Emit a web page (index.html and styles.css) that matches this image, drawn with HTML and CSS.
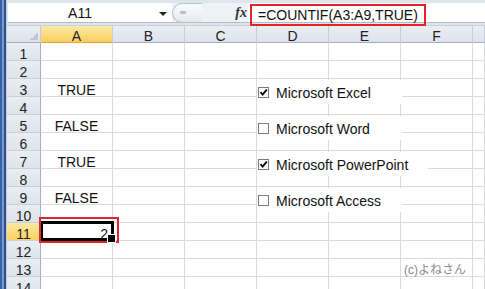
FILE: index.html
```html
<!DOCTYPE html>
<html>
    <head>
        <meta charset="utf-8">
        <title>COUNTIF</title>
        <link rel="stylesheet" href="styles.css">
    </head>
    <body>
        <div class="app">
            <div class="edge"></div>
            <div class="main">
                <!-- name box + formula bar -->
                <div class="fbar">
                    <div class="namebox">A11<span class="arrow"></span></div>
                    <div class="split">
                        <div class="knob"><span></span></div>
                        <div class="fx">fx</div>
                    </div>
                    <div class="formula"><span class="hl">=COUNTIF(A3:A9,TRUE)</span></div>
                </div>

                <!-- sheet -->
                <div class="grid">
                    <div class="h corner"></div><div class="h on">A</div><div class="h">B</div><div class="h">C</div><div class="h">D</div><div class="h">E</div><div class="h">F</div><div class="h"></div>

                    <div class="rh">1</div><div class="c"></div><div class="c"></div><div class="c"></div><div class="c"></div><div class="c"></div><div class="c"></div><div class="c"></div>
                    <div class="rh">2</div><div class="c"></div><div class="c"></div><div class="c"></div><div class="c"></div><div class="c"></div><div class="c"></div><div class="c"></div>
                    <div class="rh">3</div><div class="c mid">TRUE</div><div class="c"></div><div class="c"></div><div class="c"></div><div class="c"></div><div class="c"></div><div class="c"></div>
                    <div class="rh">4</div><div class="c"></div><div class="c"></div><div class="c"></div><div class="c"></div><div class="c"></div><div class="c"></div><div class="c"></div>
                    <div class="rh">5</div><div class="c mid">FALSE</div><div class="c"></div><div class="c"></div><div class="c"></div><div class="c"></div><div class="c"></div><div class="c"></div>
                    <div class="rh">6</div><div class="c"></div><div class="c"></div><div class="c"></div><div class="c"></div><div class="c"></div><div class="c"></div><div class="c"></div>
                    <div class="rh">7</div><div class="c mid">TRUE</div><div class="c"></div><div class="c"></div><div class="c"></div><div class="c"></div><div class="c"></div><div class="c"></div>
                    <div class="rh">8</div><div class="c"></div><div class="c"></div><div class="c"></div><div class="c"></div><div class="c"></div><div class="c"></div><div class="c"></div>
                    <div class="rh">9</div><div class="c mid">FALSE</div><div class="c"></div><div class="c"></div><div class="c"></div><div class="c"></div><div class="c"></div><div class="c"></div>
                    <div class="rh">10</div><div class="c"></div><div class="c"></div><div class="c"></div><div class="c"></div><div class="c"></div><div class="c"></div><div class="c"></div>
                    <div class="rh on">11</div><div class="c num sel">2<span class="mark"></span></div><div class="c"></div><div class="c"></div><div class="c"></div><div class="c"></div><div class="c"></div><div class="c"></div>
                    <div class="rh">12</div><div class="c"></div><div class="c"></div><div class="c"></div><div class="c"></div><div class="c"></div><div class="c"></div><div class="c"></div>
                    <div class="rh">13</div><div class="c"></div><div class="c"></div><div class="c"></div><div class="c"></div><div class="c"></div><div class="c copy">(c)よねさん</div><div class="c"></div>
                    <div class="rh">14</div><div class="c"></div><div class="c"></div><div class="c"></div><div class="c"></div><div class="c"></div><div class="c"></div><div class="c"></div>

                    <!-- form checkboxes lying on the sheet -->
                    <div class="ctl ctl-excel"><span class="box checked"><svg width="9" height="9" viewBox="0 0 9 9"><path d="M1.5 4.2 L3.6 6.6 L7.8 1.6" fill="none" stroke="#000" stroke-width="1.8"/></svg></span><span class="lbl">Microsoft Excel</span></div>
                    <div class="ctl ctl-word"><span class="box"></span><span class="lbl">Microsoft Word</span></div>
                    <div class="ctl ctl-ppt"><span class="box checked"><svg width="9" height="9" viewBox="0 0 9 9"><path d="M1.5 4.2 L3.6 6.6 L7.8 1.6" fill="none" stroke="#000" stroke-width="1.8"/></svg></span><span class="lbl">Microsoft PowerPoint</span></div>
                    <div class="ctl ctl-access"><span class="box"></span><span class="lbl">Microsoft Access</span></div>
                </div>
            </div>
        </div>
    </body>
</html>
```

FILE: styles.css
```css
* {
    box-sizing: border-box;
}

body {
    margin: 0;
    width: 485px;
    height: 289px;
    overflow: hidden;
    background: #fff;
    color: #111;
    font-family: "Liberation Sans", "Noto Sans CJK JP", sans-serif;
    font-size: 14px;
}

.app {
    display: flex;
    height: 289px;
}

.edge {
    flex: none;
    width: 7px;
    background: linear-gradient(to right, #3a62a6 0 2px, #7b99c9 2px 4px, #2c5193 4px 6px, #c6d0dc 6px 7px);
}

.main {
    flex: 1;
    min-width: 0;
    display: flex;
    flex-direction: column;
    overflow: hidden;
}

/* formula bar */
.fbar {
    flex: none;
    height: 26px;
    display: flex;
    align-items: flex-start;
    padding: 3px 0 0 1px;
    background: #dfe5ec;
    border-bottom: 1px solid #c9d1da;
}

.namebox {
    position: relative;
    width: 164px;
    height: 20px;
    padding-right: 20px;
    background: #fff;
    border-bottom: 1px solid #b3bcc7;
    text-align: center;
    line-height: 20px;
}

.namebox .arrow {
    position: absolute;
    right: 5px;
    top: 9px;
    border-left: 4px solid transparent;
    border-right: 4px solid transparent;
    border-top: 4px solid #222;
}

.split {
    width: 76px;
    height: 20px;
    display: flex;
    align-items: center;
    justify-content: space-between;
    background: #eef1f5;
    border-bottom: 1px solid #b3bcc7;
}

.knob {
    width: 30px;
    height: 20px;
    border: 1px solid #b9c1cb;
    border-right: none;
    border-radius: 10px 0 0 10px;
    background: linear-gradient(#fbfcfd, #e4e8ee);
    padding: 7px 0 0 7px;
}

.knob span {
    display: block;
    width: 6px;
    height: 3px;
    background: #b7bec8;
    border-radius: 1px;
}

.fx {
    padding-right: 1px;
    font-family: "Liberation Serif", serif;
    font-style: italic;
    font-weight: bold;
    font-size: 14px;
    color: #333;
}

.formula {
    flex: 1;
    height: 20px;
    padding-left: 2px;
    background: #fff;
    border-bottom: 1px solid #b3bcc7;
}

.hl {
    display: inline-block;
    width: 176px;
    height: 22px;
    margin-top: 1px;
    padding-left: 6px;
    border: 2px solid #e3232b;
    line-height: 18px;
    white-space: nowrap;
}

/* sheet */
.grid {
    position: relative;
    display: grid;
    grid-template-columns: 34px repeat(6, 72px) 12px;
    grid-template-rows: 17px;
    grid-auto-rows: 18px;
}

.h,
.rh {
    background: linear-gradient(#eaeef3, #dee4eb);
    color: #222;
    text-align: center;
    line-height: 15px;
    padding-top: 3px;
}

.h {
    border-right: 1px solid #c6cdd6;
    border-bottom: 1px solid #9eb0c4;
}

.h.on {
    background: linear-gradient(#fde9a6, #f8cf5e);
    border-bottom-color: #eca23a;
}

.corner {
    background:
        linear-gradient(135deg, transparent 0 60%, #bfc6cf 60%) right 2px bottom 2px / 10px 10px no-repeat,
        linear-gradient(#eaeef3, #dee4eb);
}

.rh {
    border-right: 1px solid #9eb0c4;
    border-bottom: 1px solid #c8d0da;
    padding-top: 4px;
}

.rh.on {
    background: linear-gradient(#fde7a0, #f9d262);
    border-right-color: #eca23a;
}

.c {
    border-right: 1px solid #dadada;
    border-bottom: 1px solid #dadada;
    line-height: 15px;
    padding-top: 4px;
    white-space: nowrap;
}

.mid {
    text-align: center;
}

.num {
    text-align: right;
    padding-right: 4px;
}

.sel {
    position: relative;
}

.sel::before {
    content: "";
    position: absolute;
    left: -1px;
    top: -2px;
    right: -2px;
    bottom: -1px;
    border: 3px solid #000;
}

.sel::after {
    content: "";
    position: absolute;
    right: -4px;
    bottom: -3px;
    width: 7px;
    height: 7px;
    background: #000;
    border: 1px solid #fff;
}

.sel .mark {
    position: absolute;
    left: -2px;
    top: -6px;
    right: -7px;
    bottom: -3px;
    border: 2px solid #e3232b;
}

.copy {
    text-align: right;
    padding-right: 6px;
    font-size: 12px;
    color: #8a8a8a;
}

/* checkbox controls */
.ctl {
    position: absolute;
    left: 250px;
    width: 145px;
    height: 24px;
    display: flex;
    align-items: flex-start;
    padding: 7px 0 0 1px;
    background: #fff;
}

.ctl-excel {
    top: 54px;
}

.ctl-word {
    top: 90px;
}

.ctl-ppt {
    top: 126px;
    width: 171px;
}

.ctl-access {
    top: 162px;
}

.box {
    flex: none;
    width: 11px;
    height: 11px;
    border: 1px solid #7c7c7c;
    background: #fff;
    display: flex;
    align-items: center;
    justify-content: center;
}

.lbl {
    margin-left: 7px;
    margin-top: -1px;
    line-height: 15px;
    white-space: nowrap;
}
```
